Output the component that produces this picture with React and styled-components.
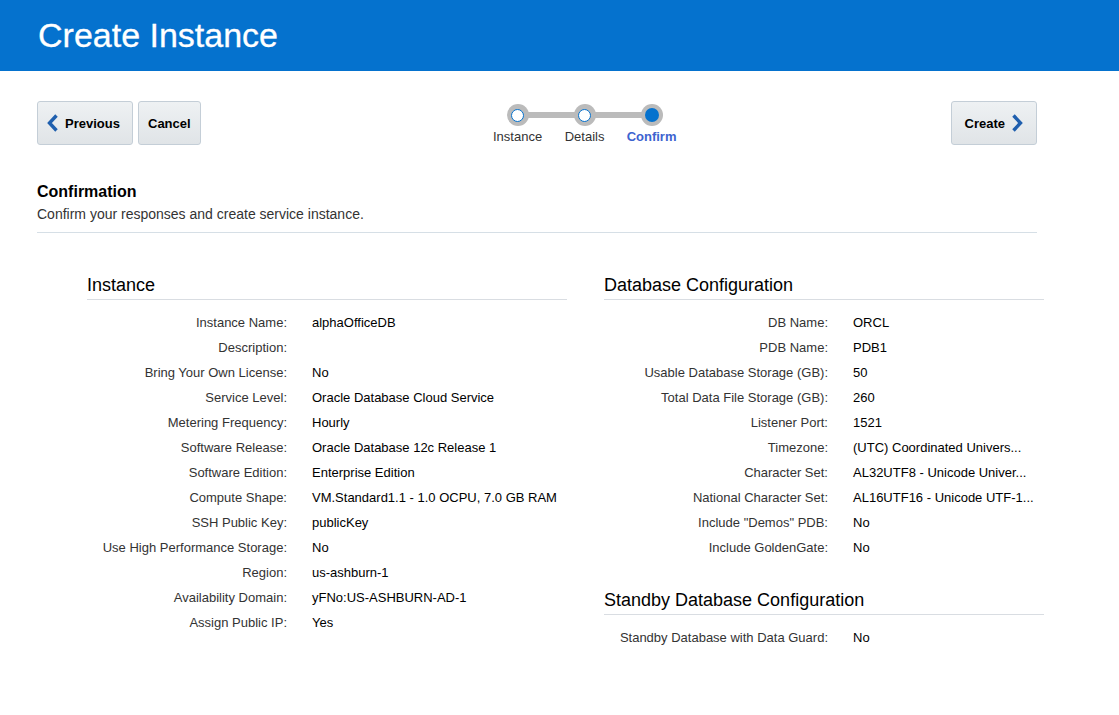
import React from 'react';
import styled, { createGlobalStyle } from 'styled-components';

const GlobalStyle = createGlobalStyle`
  body {
    margin: 0;
    background: #fff;
    font-family: "Liberation Sans", Arial, Helvetica, sans-serif;
    color: #333;
  }
`;

const Header = styled.header`
  height: 71px;
  background: #0572ce;
  display: flex;
  align-items: center;
  padding-left: 38px;
`;

const Title = styled.h1`
  margin: 0;
  font-size: 34px;
  font-weight: normal;
  color: #fff;
  -webkit-text-stroke: 0.3px #fff;
`;

const Main = styled.main`
  padding: 30px 0 0 37px;
  width: 1000px;
`;

const Toolbar = styled.div`
  display: flex;
  align-items: flex-start;
  justify-content: space-between;
`;

const ButtonGroup = styled.div`
  display: flex;
  gap: 5px;
`;

const Button = styled.button`
  height: 44px;
  display: flex;
  align-items: center;
  gap: 6px;
  padding: 0 ${p => (p.$pad ? p.$pad : 10)}px;
  border: 1px solid #c4ced7;
  border-radius: 3px;
  background: linear-gradient(#eef1f3, #e0e4e7);
  font-family: inherit;
  font-size: 13px;
  font-weight: bold;
  color: #000;
  cursor: pointer;
`;

const Train = styled.ol`
  list-style: none;
  margin: 3px 0 0 18px;
  padding: 0;
  display: flex;
`;

const Step = styled.li`
  position: relative;
  width: 67px;
  display: flex;
  flex-direction: column;
  align-items: center;

  &:not(:first-child)::before {
    content: '';
    position: absolute;
    top: 8px;
    right: 50%;
    width: 67px;
    height: 6px;
    background: #bbbbbb;
  }
`;

const Dot = styled.span`
  position: relative;
  z-index: 1;
  width: 22px;
  height: 22px;
  border-radius: 50%;
  background: #bbbbbb;
  display: flex;
  align-items: center;
  justify-content: center;

  &::after {
    content: '';
    width: ${p => (p.$active ? 14 : 13)}px;
    height: ${p => (p.$active ? 14 : 13)}px;
    border-radius: 50%;
    box-sizing: border-box;
    border: ${p => (p.$active ? 'none' : '1.5px solid #0572ce')};
    background: ${p => (p.$active ? '#0572ce' : '#fff')};
  }
`;

const StepLabel = styled.span`
  margin-top: 3px;
  font-size: 13px;
  white-space: nowrap;
  color: ${p => (p.$active ? '#3d63cf' : '#333')};
  font-weight: ${p => (p.$active ? 'bold' : 'normal')};
`;

const Intro = styled.div`
  margin-top: 38px;
  padding-bottom: 10px;
  border-bottom: 1px solid #d6dfe6;
`;

const IntroTitle = styled.h2`
  margin: 0;
  font-size: 16px;
  font-weight: bold;
  color: #000;
`;

const IntroText = styled.p`
  margin: 5px 0 0;
  font-size: 14px;
  color: #333;
`;

const Columns = styled.div`
  display: grid;
  grid-template-columns: 480px 440px;
  column-gap: 37px;
  padding-left: 50px;
  margin-top: 42px;
`;

const Column = styled.div`
  display: flex;
  flex-direction: column;
  gap: 30px;
`;

const Section = styled.section``;

const SectionTitle = styled.h3`
  margin: 0;
  padding-bottom: 3px;
  font-size: 18px;
  font-weight: normal;
  color: #000;
  border-bottom: 1px solid #d9dde2;
`;

const Rows = styled.dl`
  margin: 10px 0 0;
  display: grid;
  grid-template-columns: ${p => p.$label}px 1fr;
  column-gap: 25px;
  grid-auto-rows: 25px;
  align-items: center;
  font-size: 13px;
`;

const Label = styled.dt`
  text-align: right;
  color: #333;
  white-space: nowrap;
`;

const Value = styled.dd`
  margin: 0;
  color: #000;
  white-space: nowrap;
`;

const Chevron = ({ dir }) => (
  <svg width="12" height="18" viewBox="0 0 12 18">
    <path
      d={dir === 'left' ? 'M9.5 1.5 L2.5 9 L9.5 16.5' : 'M2.5 1.5 L9.5 9 L2.5 16.5'}
      fill="none"
      stroke="#1f5fae"
      strokeWidth="3.4"
      strokeLinejoin="miter"
    />
  </svg>
);

const instanceRows = [
  ['Instance Name:', 'alphaOfficeDB'],
  ['Description:', ''],
  ['Bring Your Own License:', 'No'],
  ['Service Level:', 'Oracle Database Cloud Service'],
  ['Metering Frequency:', 'Hourly'],
  ['Software Release:', 'Oracle Database 12c Release 1'],
  ['Software Edition:', 'Enterprise Edition'],
  ['Compute Shape:', 'VM.Standard1.1 - 1.0 OCPU, 7.0 GB RAM'],
  ['SSH Public Key:', 'publicKey'],
  ['Use High Performance Storage:', 'No'],
  ['Region:', 'us-ashburn-1'],
  ['Availability Domain:', 'yFNo:US-ASHBURN-AD-1'],
  ['Assign Public IP:', 'Yes'],
];

const dbRows = [
  ['DB Name:', 'ORCL'],
  ['PDB Name:', 'PDB1'],
  ['Usable Database Storage (GB):', '50'],
  ['Total Data File Storage (GB):', '260'],
  ['Listener Port:', '1521'],
  ['Timezone:', '(UTC) Coordinated Univers...'],
  ['Character Set:', 'AL32UTF8 - Unicode Univer...'],
  ['National Character Set:', 'AL16UTF16 - Unicode UTF-1...'],
  ['Include "Demos" PDB:', 'No'],
  ['Include GoldenGate:', 'No'],
];

const standbyRows = [['Standby Database with Data Guard:', 'No']];

const RowList = ({ rows, label }) => (
  <Rows $label={label}>
    {rows.map(([k, v]) => (
      <React.Fragment key={k}>
        <Label>{k}</Label>
        <Value>{v}</Value>
      </React.Fragment>
    ))}
  </Rows>
);

const steps = ['Instance', 'Details', 'Confirm'];

export default function App() {
  return (
    <>
      <GlobalStyle />
      <Header>
        <Title>Create Instance</Title>
      </Header>
      <Main>
        <Toolbar>
          <ButtonGroup>
            <Button $pad={9} style={{ width: 96 }}>
              <Chevron dir="left" />
              Previous
            </Button>
            <Button $pad={9}>Cancel</Button>
          </ButtonGroup>
          <Train>
            {steps.map((s, i) => (
              <Step key={s}>
                <Dot $active={i === 2} />
                <StepLabel $active={i === 2}>{s}</StepLabel>
              </Step>
            ))}
          </Train>
          <Button $pad={13}>
            Create
            <Chevron dir="right" />
          </Button>
        </Toolbar>
        <Intro>
          <IntroTitle>Confirmation</IntroTitle>
          <IntroText>Confirm your responses and create service instance.</IntroText>
        </Intro>
        <Columns>
          <Column>
            <Section>
              <SectionTitle>Instance</SectionTitle>
              <RowList rows={instanceRows} label={200} />
            </Section>
          </Column>
          <Column>
            <Section>
              <SectionTitle>Database Configuration</SectionTitle>
              <RowList rows={dbRows} label={224} />
            </Section>
            <Section>
              <SectionTitle>Standby Database Configuration</SectionTitle>
              <RowList rows={standbyRows} label={224} />
            </Section>
          </Column>
        </Columns>
      </Main>
    </>
  );
}
